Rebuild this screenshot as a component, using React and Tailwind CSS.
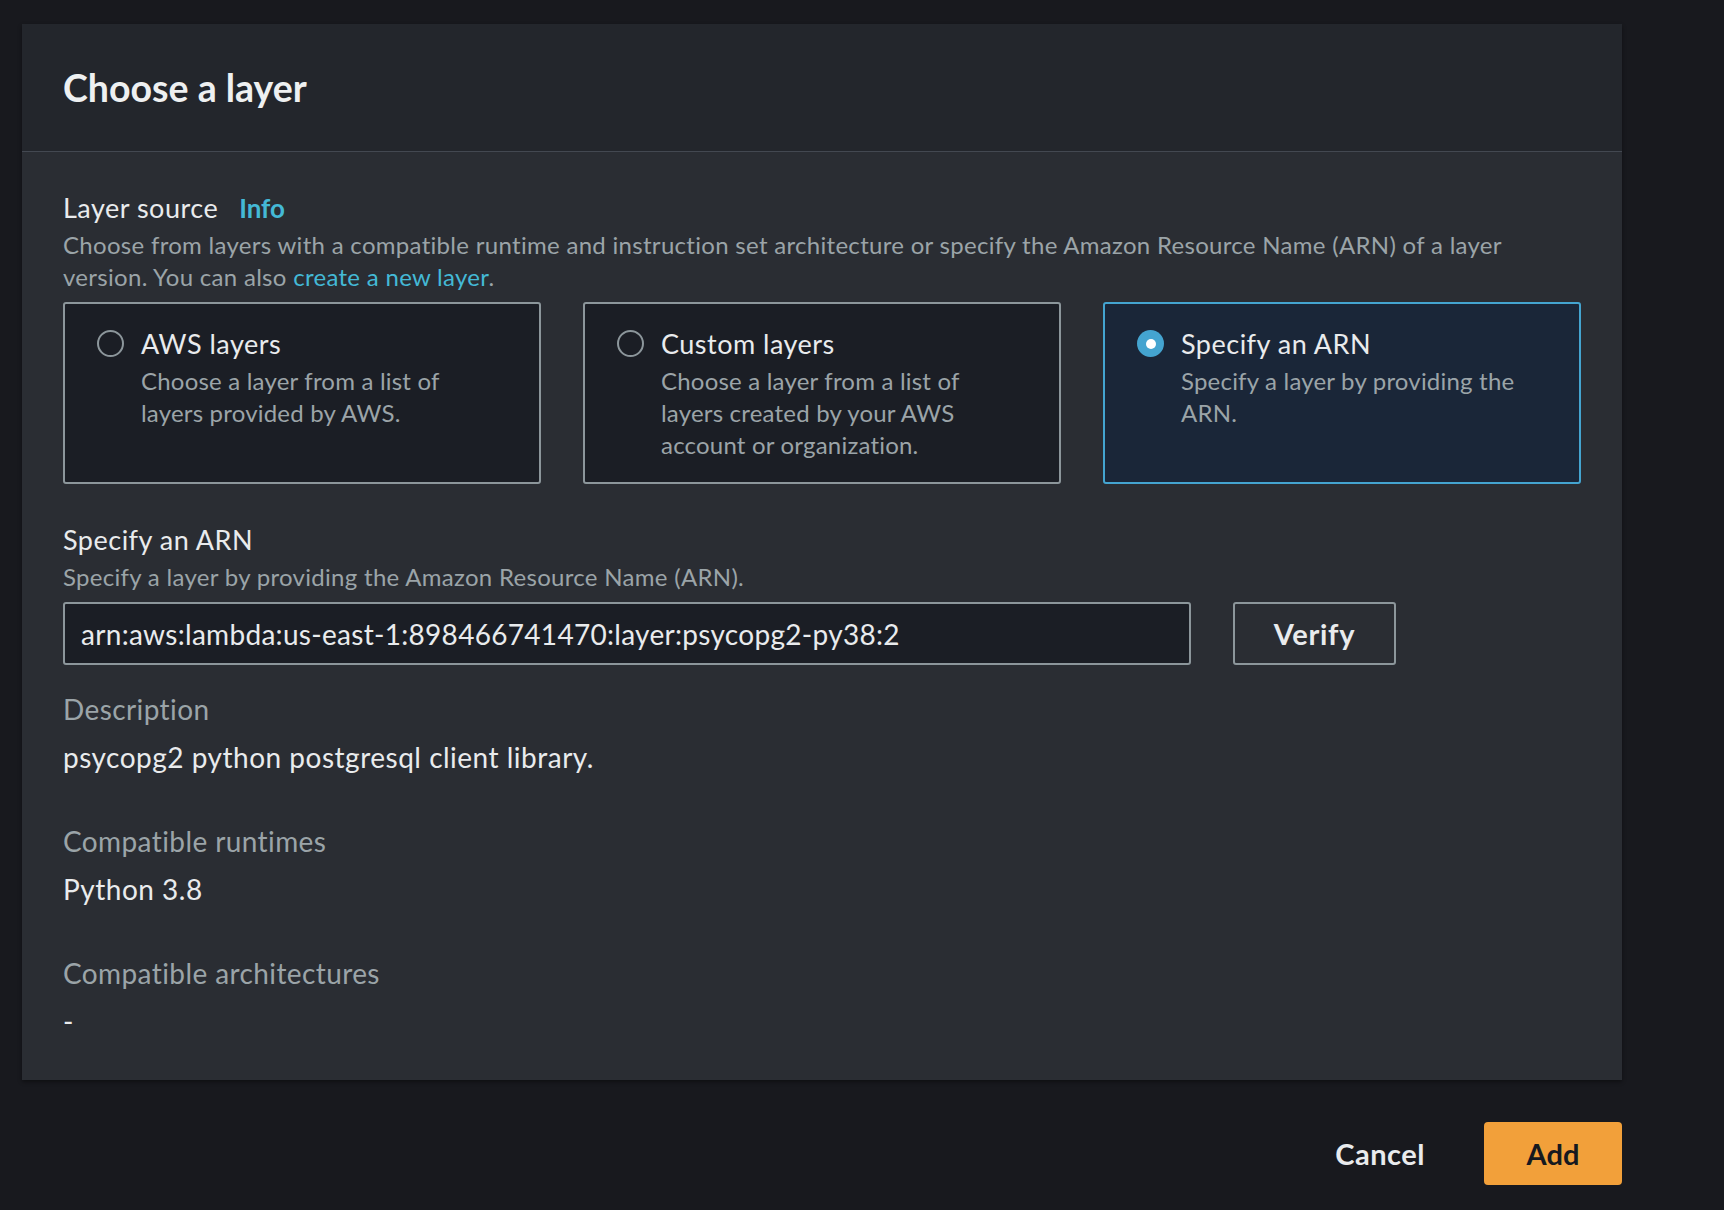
import React from 'react';

const cards = [
    { id: 'aws', title: 'AWS layers', desc: 'Choose a layer from a list of layers provided by AWS.' },
    { id: 'custom', title: 'Custom layers', desc: 'Choose a layer from a list of layers created by your AWS account or organization.' },
    { id: 'arn', title: 'Specify an ARN', desc: 'Specify a layer by providing the ARN.' },
];

function Radio({ checked }) {
    if (checked) {
        return (<span className="mt-[2px] flex h-[27px] w-[27px] flex-shrink-0 items-center justify-center rounded-full bg-[#44a4d0]">
                <span className="h-[10px] w-[10px] rounded-full bg-white"/>
            </span>);
    }
    return <span className="mt-[2px] h-[27px] w-[27px] flex-shrink-0 rounded-full border-2 border-[#8c969b]"/>;
}

function Field({ label, value, className }) {
    return (<div className={className}>
            <div className="text-[28px] leading-[32px] tracking-[0.4px] text-[#9ba4a8]">{label}</div>
            <div className="mt-[16px] text-[28px] leading-[32px] tracking-[0.5px] text-[#e9ebed]">{value}</div>
        </div>);
}

export default function App() {
    const [source, setSource] = React.useState('arn');
    const [arn, setArn] = React.useState('arn:aws:lambda:us-east-1:898466741470:layer:psycopg2-py38:2');

    return (<div className="min-h-[1210px] w-full bg-[#18191e] pt-[24px] pl-[22px] font-['Lato',sans-serif]">
            <div className="w-[1600px] bg-[#2a2d33] shadow-[0_2px_4px_rgba(0,0,0,0.4)]">
                <div className="flex h-[128px] items-center border-b border-[#434851] bg-[#23262c] px-[41px]">
                    <h1 className="text-[37.5px] font-bold leading-none text-[#eef0f1]">Choose a layer</h1>
                </div>

                <div className="px-[41px] pt-[40px] pb-[43px]">
                    {/* Layer source */}
                    <div className="flex items-baseline gap-[21px] leading-[32px]">
                        <span className="text-[27px] tracking-[0.5px] text-[#e9ebed]">Layer source</span>
                        <span className="text-[26px] font-bold text-[#44b9d6]">Info</span>
                    </div>
                    <p className="mt-[5px] text-[24px] leading-[32px] tracking-[0.3px] text-[#9ba4a8]">
                        Choose from layers with a compatible runtime and instruction set architecture or specify the Amazon Resource Name (ARN) of a layer version. You can also <span className="text-[#44b9d6]">create a new layer</span>.
                    </p>

                    <div className="mt-[9px] grid grid-cols-3 gap-[42px]">
                        {cards.map(c => {
                            const on = source === c.id;
                            return (<button key={c.id} type="button" onClick={() => setSource(c.id)} className={`flex h-[182px] items-start gap-[17px] rounded-[3px] border-2 px-[32px] pt-[24px] text-left ${on ? 'border-[#44a4d0] bg-[#1a2638]' : 'border-[#8c969b] bg-[#1b1e25]'}`}>
                                    <Radio checked={on}/>
                                    <div className="w-[338px]">
                                        <div className="text-[27px] leading-[32px] tracking-[0.5px] text-[#e9ebed]">{c.title}</div>
                                        <div className="mt-[5px] text-[24px] leading-[32px] tracking-[0.2px] text-[#9ba4a8]">{c.desc}</div>
                                    </div>
                                </button>);
                        })}
                    </div>

                    {/* ARN input */}
                    <div className="mt-[40px] text-[27px] leading-[32px] tracking-[0.5px] text-[#e9ebed]">Specify an ARN</div>
                    <div className="mt-[5px] text-[24px] leading-[32px] tracking-[0.3px] text-[#9ba4a8]">Specify a layer by providing the Amazon Resource Name (ARN).</div>
                    <div className="mt-[9px] flex gap-[42px]">
                        <input value={arn} onChange={e => setArn(e.target.value)} className="h-[63px] w-[1128px] rounded-[3px] border-2 border-[#8c969b] bg-[#1b1e25] px-[16px] text-[28px] tracking-[0.3px] text-[#e9ebed] outline-none"/>
                        <button type="button" className="h-[63px] w-[163px] rounded-[3px] border-2 border-[#8c969b] text-[29px] font-bold tracking-[0.7px] text-[#e9ebed]">Verify</button>
                    </div>

                    <Field className="mt-[28px]" label="Description" value="psycopg2 python postgresql client library."/>
                    <Field className="mt-[52px]" label="Compatible runtimes" value="Python 3.8"/>
                    <Field className="mt-[52px]" label="Compatible architectures" value="-"/>
                </div>
            </div>

            <div className="mt-[42px] flex w-[1600px] items-center justify-end gap-[59px]">
                <button type="button" className="text-[29px] font-bold tracking-[0.5px] text-[#e9ebed]">Cancel</button>
                <button type="button" className="h-[63px] w-[138px] rounded-[4px] bg-[#f2a03a] text-[29px] font-bold text-[#16191f]">Add</button>
            </div>
        </div>);
}
